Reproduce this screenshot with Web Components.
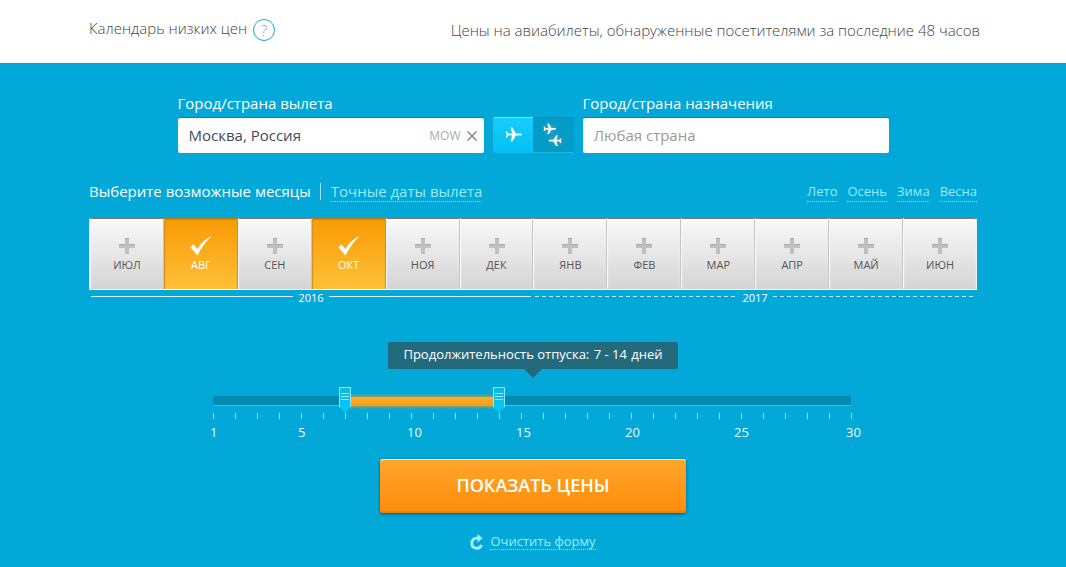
<!DOCTYPE html>
<html lang="ru">
<head>
<meta charset="utf-8">
<meta name="viewport" content="width=device-width, initial-scale=1">
<title>Календарь низких цен</title>
<style>
  body {
    margin: 0;
    min-height: 100vh;
    background: #02a8d7;
    font-family: "Open Sans", "Noto Sans", sans-serif;
  }
</style>
</head>
<body>
<price-header>
  <span slot="title">Календарь низких цен</span>
  Цены на авиабилеты, обнаруженные посетителями за последние 48 часов
</price-header>
<search-form></search-form>

<script>
'use strict';

class PriceHeader extends HTMLElement {
  constructor() {
    super();
    this.root = this.attachShadow({mode: 'open'});
  }
  connectedCallback() {
    this.root.innerHTML = `
    <style>
      :host {
        display: block;
        background: #fff;
        color: #444;
        font-size: 15px;
        font-weight: 300;
        line-height: 22px;
      }
      .bar {
        display: flex;
        justify-content: space-between;
        align-items: center;
        box-sizing: border-box;
        max-width: 894px;
        min-height: 63px;
        margin: 0 auto;
        padding: 0 0 4px 3px;
      }
      .title {
        display: flex;
        gap: 6px;
        line-height: 18px;
      }
      button {
        width: 22px;
        height: 22px;
        padding: 0;
        border: 1px solid #1fa5c6;
        border-radius: 50%;
        background: none;
        color: #999;
        font: inherit;
        line-height: 20px;
      }
      .note {
        margin: 0;
      }
    </style>
    <header class="bar">
      <div class="title"><slot name="title"></slot><button type="button">?</button></div>
      <p class="note"><slot></slot></p>
    </header>
    `;
  }
}
customElements.define('price-header', PriceHeader);

class CityField extends HTMLElement {
  constructor() {
    super();
    this.root = this.attachShadow({mode: 'open'});
  }
  connectedCallback() {
    const code = this.getAttribute('code');
    this.root.innerHTML = `
    <style>
      :host {
        display: block;
        flex: 1;
        min-width: 0;
      }
      label {
        display: block;
        margin-bottom: 5px;
        color: #fff;
        font-size: 15px;
        line-height: 20px;
      }
      .box {
        display: flex;
        align-items: center;
        height: 35px;
        border-radius: 2px;
        background: #fff;
        box-shadow: 0 -1px 0 #0784a8;
      }
      input {
        flex: 1;
        min-width: 0;
        height: 33px;
        margin-bottom: 2px;
        padding: 0 11px;
        border: 0;
        outline: 0;
        background: none;
        box-sizing: border-box;
        color: #3f4a5a;
        font: 15px "Open Sans", sans-serif;
      }
      input::placeholder {
        color: #999;
      }
      .code {
        color: #aaa;
        font-size: 12px;
      }
      button {
        display: flex;
        padding: 0 7px 0 6px;
        border: 0;
        background: none;
      }
    </style>
    <label for="city">${this.getAttribute('label')}</label>
    <div class="box">
      <input id="city" type="text" value="${this.getAttribute('value') || ''}" placeholder="${this.getAttribute('placeholder') || ''}">
      ${code ? `
      <span class="code">${code}</span>
      <button type="button" aria-label="Очистить">
        <svg width="10" height="10" viewBox="0 0 10 10" fill="none" stroke="#888" stroke-width="1.500"><path d="M0.500 0.500l9 9M9.500 0.500l-9 9"/></svg>
      </button>` : ''}
    </div>
    `;
  }
}
customElements.define('city-field', CityField);

const PLANE = 'M17 7.500c0-.7-1-1.100-2.200-1.100h-4L7.400.6H5.600l1.500 5.800-3.500.3L2 4.600H.8l.7 2.900-.7 2.900H2l1.600-2.100 3.500.3-1.500 5.800h1.800l3.400-5.800h4c1.200 0 2.200-.4 2.200-1.100z';

class RouteSwitch extends HTMLElement {
  constructor() {
    super();
    this.root = this.attachShadow({mode: 'open'});
  }
  connectedCallback() {
    this.root.innerHTML = `
    <style>
      :host {
        display: grid;
        grid-template-columns: 1fr 1fr;
        width: 81px;
        height: 36px;
        border-radius: 2px;
        overflow: hidden;
      }
      label {
        display: grid;
        place-items: center;
        background: #049bc6;
        box-shadow: inset 0 1px 0 #078cb4, inset 0 -1px 0 #25b5de;
      }
      label.on {
        background: linear-gradient(#18cdf8, #04c0f4);
        box-shadow: inset 0 1px 0 #7ce6fd;
      }
      input {
        appearance: none;
        margin: 0;
      }
      input, svg {
        grid-area: 1 / 1;
      }
      .glow {
        filter: drop-shadow(0 0 2px #6bb);
      }
    </style>
    <label class="on" title="В одну сторону">
      <input type="radio" name="route" aria-label="В одну сторону" checked>
      <svg width="19" height="17" viewBox="-2 0 19 17" fill="#fff"><path d="${PLANE}"/></svg>
    </label>
    <label title="Туда и обратно">
      <input type="radio" name="route" aria-label="Туда и обратно">
      <svg class="glow" width="20" height="24" viewBox="0 0 20 24" fill="#fff">
        <path transform="translate(0 0) scale(.78)" d="${PLANE}"/>
        <path transform="translate(19 23.5) rotate(180) scale(.78)" d="${PLANE}"/>
      </svg>
    </label>
    `;
    this.root.addEventListener('change', () => {
      this.root.querySelectorAll('label').forEach(label => {
        label.classList.toggle('on', label.querySelector('input').checked);
      });
    });
  }
}
customElements.define('route-switch', RouteSwitch);

class MonthCell extends HTMLElement {
  constructor() {
    super();
    this.root = this.attachShadow({mode: 'open'});
  }
  connectedCallback() {
    this.root.innerHTML = `
    <style>
      :host {
        display: block;
        min-width: 0;
      }
      label {
        display: flex;
        flex-direction: column;
        align-items: center;
        gap: 2px;
        height: 71px;
        padding-top: 17px;
        box-sizing: border-box;
        border: solid;
        border-width: 1px 1px 0;
        border-color: #777 #c4c4c4 #777 #fafafa;
        background: linear-gradient(#f9f9f9, #d4d4d4);
        box-shadow: inset 0 2px 1px #fff;
        color: #555;
        font-size: 11px;
        line-height: 14px;
      }
      :host(:last-child) label {
        border-top-right-radius: 3px;
        border-right-color: #eee;
      }
      input {
        appearance: none;
        position: absolute;
        margin: 0;
      }
      .check {
        display: none;
      }
      label:has(:checked) {
        border-color: #b8770f #d98f1c;
        background: linear-gradient(#f99a04, #fdc038);
        box-shadow: inset 0 1px 1px #dd8a08;
        color: #fff;
      }
      label:has(:checked) .plus {
        display: none;
      }
      label:has(:checked) .check {
        display: block;
      }
    </style>
    <label>
      <input type="checkbox" ${this.hasAttribute('checked') ? 'checked' : ''}>
      <svg class="plus" width="22" height="20" viewBox="0 0 22 20"><path fill="#c0c0c0" d="M9 2h4v6h6v4h-6v6H9v-6H3V8h6z"/><path fill="#a8a8a8" d="M9 2h4v1H9zM3 8h6v1H3zM13 8h6v1h-6z"/></svg>
      <svg class="check" width="22" height="20" viewBox="0 0 22 20"><path fill="#fff" d="M0 11l3.500-2.500 4 4.500C11 7 15.500 2.500 21.500 0 16 5.500 11.500 11.500 7.500 19.500z"/></svg>
      <slot></slot>
    </label>
    `;
  }
}
customElements.define('month-cell', MonthCell);

class MonthPicker extends HTMLElement {
  constructor() {
    super();
    this.root = this.attachShadow({mode: 'open'});
  }
  connectedCallback() {
    this.root.innerHTML = `
    <style>
      :host {
        display: block;
        color: #fff;
      }
      .head {
        display: flex;
        justify-content: space-between;
        align-items: center;
        margin-bottom: 16px;
        font-size: 15px;
        line-height: 20px;
      }
      .modes, .seasons {
        display: flex;
      }
      .modes a {
        margin-left: 10px;
      }
      .modes span {
        padding-right: 10px;
        background: linear-gradient(#9fe4f7, #9fe4f7) right center / 1px 17px no-repeat;
      }
      .seasons {
        gap: 10px;
        font-size: 13px;
        line-height: 20px;
      }
      a {
        border-bottom: 1px dotted #8fe0f5;
        color: #9ceafa;
        text-decoration: none;
      }
      .months {
        display: grid;
        grid-template-columns: repeat(12, 1fr);
        padding-left: 1px;
        border-bottom: 1px solid #fff;
        border-top-left-radius: 3px;
        border-top-right-radius: 3px;
        background: #eee;
      }
      .years {
        display: grid;
        grid-template-columns: 1fr 1fr;
        font-size: 11px;
        font-weight: 500;
        line-height: 16px;
      }
      .year {
        display: flex;
        gap: 5px;
        padding: 0 2px;
      }
      .year::before, .year::after {
        content: "";
        flex: 1;
        height: 6px;
        border-bottom: 1px solid #d6f7ff;
      }
      .next::before, .next::after {
        height: 7px;
        border-bottom: 0;
        background: repeating-linear-gradient(90deg, #b5eefb 0 4px, transparent 4px 7px) bottom / 100% 1px no-repeat;
      }
    </style>
    <div class="head">
      <div class="modes"><span>Выберите возможные месяцы</span><a href="#dates">Точные даты вылета</a></div>
      <nav class="seasons">
        <a href="#summer">Лето</a><a href="#autumn">Осень</a><a href="#winter">Зима</a><a href="#spring">Весна</a>
      </nav>
    </div>
    <div class="months">
      <month-cell>ИЮЛ</month-cell>
      <month-cell checked>АВГ</month-cell>
      <month-cell>СЕН</month-cell>
      <month-cell checked>ОКТ</month-cell>
      <month-cell>НОЯ</month-cell>
      <month-cell>ДЕК</month-cell>
      <month-cell>ЯНВ</month-cell>
      <month-cell>ФЕВ</month-cell>
      <month-cell>МАР</month-cell>
      <month-cell>АПР</month-cell>
      <month-cell>МАЙ</month-cell>
      <month-cell>ИЮН</month-cell>
    </div>
    <div class="years">
      <div class="year">2016</div>
      <div class="year next">2017</div>
    </div>
    `;
  }
}
customElements.define('month-picker', MonthPicker);

class DaysSlider extends HTMLElement {
  constructor() {
    super();
    this.root = this.attachShadow({mode: 'open'});
  }
  connectedCallback() {
    this.root.innerHTML = `
    <style>
      :host {
        --from: 7;
        --to: 14;
        display: block;
        max-width: 640px;
        margin: 0 auto;
        color: #e2faff;
      }
      .tip {
        display: block;
        width: max-content;
        margin: 0 auto;
        padding: 0 15px 2px;
        border-radius: 2px;
        background: #246a7d;
        color: #fff;
        font-size: 13px;
        line-height: 25px;
      }
      .days {
        margin: 0 1px;
      }
      .arrow {
        width: 18px;
        height: 9px;
        margin: 0 auto 9px;
        background: #246a7d;
        clip-path: polygon(0 0, 100% 0, 50% 100%);
      }
      .track {
        display: grid;
        align-items: center;
        height: 26px;
        margin-right: 2px;
      }
      .track > * {
        grid-area: 1 / 1;
      }
      .rail, .range {
        height: 9px;
        margin-top: 2px;
      }
      .rail {
        border-bottom: 1px solid #3cc0e4;
        border-radius: 2px;
        background: #0489b0;
      }
      .range {
        margin-left: calc((var(--from) - 1) / 29 * 100%);
        margin-right: calc((30 - var(--to)) / 29 * 100%);
        background: linear-gradient(#fbb02c, #f99b0e);
        box-shadow: 0 0 3px 1px #b9a649;
      }
      input {
        appearance: none;
        height: 26px;
        margin: 0 -6px;
        background: none;
        pointer-events: none;
      }
      input::-webkit-slider-thumb {
        appearance: none;
        width: 12px;
        height: 26px;
        box-sizing: border-box;
        border: 1px solid #8fe9fd;
        border-bottom: 0;
        background:
          linear-gradient(#a5ecfc, #a5ecfc) center 5px / 8px 1px no-repeat,
          linear-gradient(#a5ecfc, #a5ecfc) center 8px / 8px 1px no-repeat,
          linear-gradient(#a5ecfc, #a5ecfc) center 11px / 8px 1px no-repeat,
          linear-gradient(#12b4e2, #06c6f6 70%);
        clip-path: polygon(0 0, 100% 0, 100% 75%, 50% 100%, 0 75%);
        pointer-events: auto;
      }
      .ticks {
        height: 6px;
        background: repeating-linear-gradient(90deg, #8fe2f6 0 1px, transparent 1px 22px);
      }
      .scale {
        display: grid;
        grid-template-columns: 88fr 109fr 109fr 109fr 109fr 112fr 16fr;
        margin: 4px -9px 0 -3px;
        font-size: 13px;
        font-weight: 500;
        line-height: 18px;
      }
    </style>
    <output class="tip">Продолжительность отпуска: <span class="days"></span> дней</output>
    <div class="arrow"></div>
    <div class="track">
      <div class="rail"></div>
      <div class="range"></div>
      <input class="from" type="range" min="1" max="30" value="7" aria-label="Дней, от">
      <input class="to" type="range" min="1" max="30" value="14" aria-label="Дней, до">
    </div>
    <div class="ticks"></div>
    <div class="scale">
      <span>1</span><span>5</span><span>10</span><span>15</span><span>20</span><span>25</span><span>30</span>
    </div>
    `;
    this.root.addEventListener('input', () => this.update());
    this.update();
  }
  update() {
    const from = this.root.querySelector('.from').value;
    const to = this.root.querySelector('.to').value;
    this.style.setProperty('--from', from);
    this.style.setProperty('--to', to);
    this.root.querySelector('.days').textContent = `${from} - ${to}`;
  }
}
customElements.define('days-slider', DaysSlider);

class SearchForm extends HTMLElement {
  constructor() {
    super();
    this.root = this.attachShadow({mode: 'open'});
  }
  connectedCallback() {
    this.root.innerHTML = `
    <style>
      :host {
        display: block;
      }
      form {
        max-width: 888px;
        margin: 0 auto;
        padding: 30px 0 16px;
      }
      .cities {
        display: flex;
        align-items: flex-end;
        gap: 9px;
        max-width: 711px;
        margin: 0 auto 28px;
      }
      month-picker {
        margin-bottom: 36px;
      }
      .submit {
        display: block;
        width: 306px;
        height: 54px;
        margin: 18px auto 20px;
        padding: 0 0 2px;
        border: 0;
        border-radius: 3px;
        background: linear-gradient(#ffa62b, #fd8c0b);
        box-shadow: inset 0 1px 0 #ffe9b8, inset 0 -2px 0 #e8800f, 0 1px 3px #05546b;
        color: #fff;
        font: 600 18px "Open Sans", sans-serif;
      }
      .reset {
        display: flex;
        justify-content: center;
        align-items: center;
        gap: 7px;
      }
      a {
        border-bottom: 1px dotted #8fe0f5;
        color: #9ceafa;
        font-size: 13px;
        line-height: 16px;
        text-decoration: none;
      }
    </style>
    <form>
      <div class="cities">
        <city-field label="Город/страна вылета" value="Москва, Россия" code="MOW"></city-field>
        <route-switch></route-switch>
        <city-field label="Город/страна назначения" placeholder="Любая страна"></city-field>
      </div>
      <month-picker></month-picker>
      <days-slider></days-slider>
      <button class="submit" type="submit">ПОКАЗАТЬ ЦЕНЫ</button>
      <div class="reset">
        <svg width="13" height="16" viewBox="0 0 13 16"><path fill="none" stroke="#a9eefb" stroke-width="2.800" d="M8 4.200H6.500a5 5 0 1 0 5 6.800"/><path fill="#a9eefb" d="M7.500 0l5 4.200-5 4.300z"/></svg>
        <a href="#reset">Очистить форму</a>
      </div>
    </form>
    `;
  }
}
customElements.define('search-form', SearchForm);
</script>
</body>
</html>
